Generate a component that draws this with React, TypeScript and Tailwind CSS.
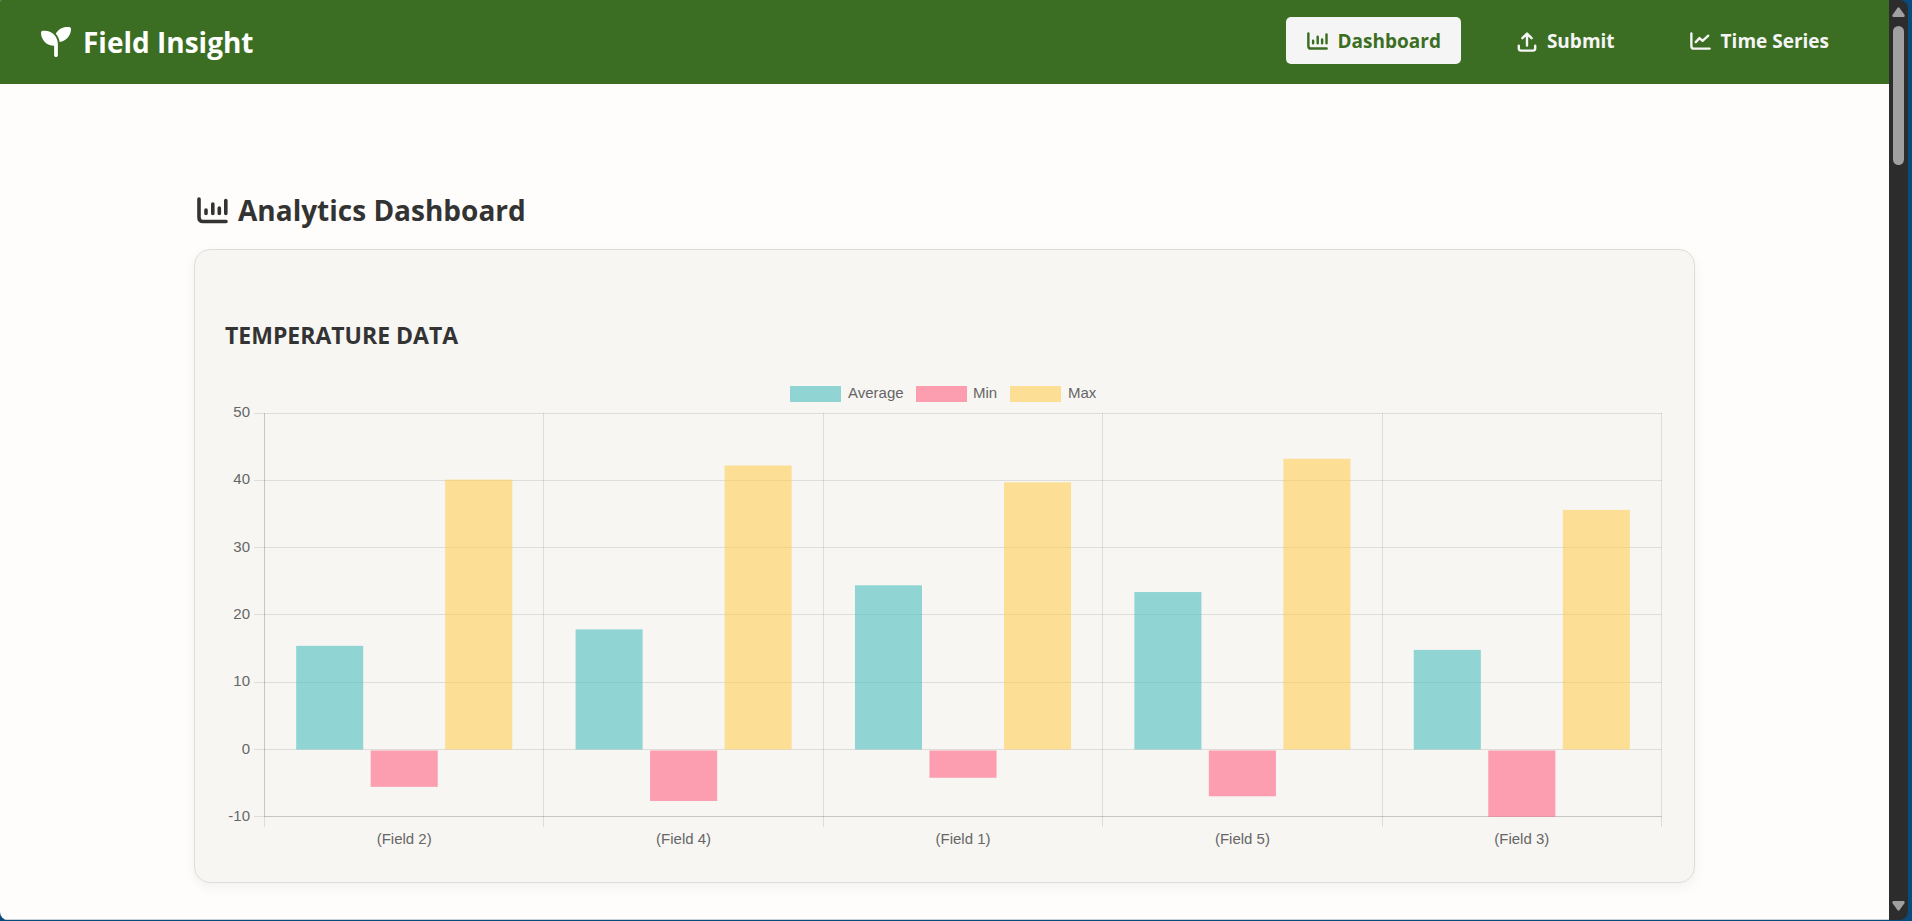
import type { ReactNode } from "react";
import { FaSeedling } from "react-icons/fa6";

const AXES = "M2 2V20.5Q2 24.5 6 24.5H29";

function BarsIcon({ className }: { className: string }) {
  return (
    <svg viewBox="0 0 31 27" className={className} fill="none" stroke="currentColor" strokeWidth="3.6" strokeLinecap="round" aria-hidden="true">
      <path d={AXES} />
      <path d="M9 13V16.5M15.8 7V16.5M22.3 11V16.5M28.8 3.5V16.5" />
    </svg>
  );
}

function LineIcon({ className }: { className: string }) {
  return (
    <svg viewBox="0 0 31 27" className={className} fill="none" stroke="currentColor" strokeWidth="3.5" strokeLinecap="round" strokeLinejoin="round" aria-hidden="true">
      <path d={AXES} />
      <path d="M8.5 15L14 9L18.5 13L27 5.5" />
    </svg>
  );
}

function UploadIcon({ className }: { className: string }) {
  return (
    <svg viewBox="0 0 20 20" className={className} fill="none" stroke="currentColor" strokeWidth="2.4" strokeLinecap="round" strokeLinejoin="round" aria-hidden="true">
      <path d="M1.8 13.8V16.2Q1.8 18.6 4.2 18.6H15.8Q18.2 18.6 18.2 16.2V13.8M10 13.5V1.6M5.4 6.2L10 1.6L14.6 6.2" />
    </svg>
  );
}

function NavItem({ label, active, children }: { label: string; active?: boolean; children: ReactNode }) {
  const tone = active ? "bg-[#f5f5f5] text-[#3b6e22]" : "text-[#f5f5f5]";
  return (
    <a
      href={"#" + label.toLowerCase().replace(" ", "-")}
      aria-current={active ? "page" : undefined}
      className={`flex h-[47px] items-center gap-2 rounded-[5px] px-5 pt-[2px] text-[19px] font-bold ${tone}`}
    >
      <span className="flex w-6 justify-center">{children}</span>
      {label}
    </a>
  );
}

const series = [
  { name: "Average", fill: "rgba(75,192,192,0.6)", x: 565, textX: 623, values: [15.4, 17.85, 24.4, 23.4, 14.8] },
  { name: "Min", fill: "rgba(255,99,132,0.6)", x: 691, textX: 748, values: [-5.55, -7.65, -4.2, -6.95, -10] },
  { name: "Max", fill: "rgba(255,206,86,0.6)", x: 785, textX: 843, values: [40.1, 42.2, 39.7, 43.2, 35.6] },
];
const fields = ["(Field 2)", "(Field 4)", "(Field 1)", "(Field 5)", "(Field 3)"];
const ticks = [50, 40, 30, 20, 10, 0, -10];

const LEFT = 39.5;
const RIGHT = 1436.5;
const STEP = (RIGHT - LEFT) / fields.length;
const UNIT = 6.73;
const ZERO = 369.5;
const yOf = (value: number) => ZERO - value * UNIT;
const snap = (value: number) => Math.floor(value) + 0.5;

function TemperatureChart() {
  const slot = (STEP * 0.8) / 3;
  const bar = slot * 0.9;
  return (
    <svg viewBox="0 0 1439 474" className="block w-full font-['Liberation_Sans',Arial,sans-serif] text-[15px]" role="img" aria-label="Average, minimum and maximum temperature by field">
      <g stroke="rgba(0,0,0,0.1)">
        {ticks.map((t) => (
          <path key={t} d={`M29 ${snap(yOf(t))}H${RIGHT + 0.5}`} />
        ))}
        {[0, 1, 2, 3, 4, 5].map((i) => (
          <path key={i} d={`M${snap(LEFT + i * STEP)} 33V447`} />
        ))}
        <path d={`M${LEFT} 33V437M${LEFT} ${snap(yOf(-10))}H${RIGHT}`} />
      </g>
      {series.map((s, n) =>
        s.values.map((v, i) => (
          <rect
            key={s.name + i}
            x={LEFT + i * STEP + STEP * 0.1 + n * slot + (slot - bar) / 2}
            y={v > 0 ? yOf(v) : ZERO + 1}
            width={bar}
            height={v > 0 ? v * UNIT : -v * UNIT - 1}
            fill={s.fill}
          />
        )),
      )}
      <g fill="#666">
        {ticks.map((t) => (
          <text key={t} x="25" y={yOf(t) + 4} textAnchor="end">{t}</text>
        ))}
        {fields.map((f, i) => (
          <text key={f} x={LEFT + (i + 0.5) * STEP} y="464" textAnchor="middle">{f}</text>
        ))}
        {series.map((s) => (
          <text key={s.name} x={s.textX} y="18">{s.name}</text>
        ))}
      </g>
      {series.map((s) => (
        <rect key={s.name} x={s.x} y="6" width="51" height="16" fill={s.fill} />
      ))}
    </svg>
  );
}

function ScrollRail() {
  return (
    <div className="flex w-[19px] shrink-0 flex-col items-center rounded-r-lg bg-[#2c2c2c] text-[#a0a0a0]" aria-hidden="true">
      <svg viewBox="0 0 13 10" className="mt-[7px] h-[10px] w-[13px]" fill="currentColor">
        <path d="M5.4 1Q6.5 -0.4 7.6 1L12.6 8Q13 9.8 11.5 10H1.5Q0 9.8 0.4 8Z" />
      </svg>
      <div className="mt-[9px] h-[139px] w-[11px] rounded-full bg-[#a0a0a0]" />
      <svg viewBox="0 0 13 10" className="mt-auto mb-[9px] h-[10px] w-[13px]" fill="currentColor">
        <path d="M5.4 9Q6.5 10.4 7.6 9L12.6 2Q13 0.2 11.5 0H1.5Q0 0.2 0.4 2Z" />
      </svg>
    </div>
  );
}

export default function App() {
  return (
    <div className="h-screen bg-[#0b4a7c] pr-1 pb-px font-['Open_Sans','Noto_Sans',sans-serif] text-[#333]">
      <div className="flex h-full overflow-hidden rounded-tl-[2px] rounded-r-lg rounded-bl-lg">
        <div className="min-w-0 flex-1 overflow-hidden border-b border-[#c9d3da] bg-[#fefdfb]">
          <header className="flex h-[84px] items-center justify-between bg-[#3b6e22] pr-10 pb-[3px] pl-[41px] text-white">
            <div className="flex items-center gap-3 pt-[3px] text-[28px] leading-9 font-bold">
              <FaSeedling className="size-[30px]" aria-hidden="true" />
              Field Insight
            </div>
            <nav className="flex gap-[34px]">
              <NavItem label="Dashboard" active>
                <BarsIcon className="w-[21px]" />
              </NavItem>
              <NavItem label="Submit">
                <UploadIcon className="w-5" />
              </NavItem>
              <NavItem label="Time Series">
                <LineIcon className="w-[21px]" />
              </NavItem>
            </nav>
          </header>
          <main className="mx-auto max-w-[1501px] pt-[106px]">
            <h1 className="flex items-center gap-[10px] pl-[3px] text-[28px] leading-10 font-bold">
              <BarsIcon className="w-[31px]" />
              Analytics Dashboard
            </h1>
            <section className="mt-[19px] rounded-2xl border border-[#dddddb] bg-[#f7f6f3] px-[30px] pt-[68px] pb-[28px] shadow-[0_4px_12px_rgba(0,0,0,0.05)]">
              <h2 className="text-[23px] leading-[34px] font-bold">TEMPERATURE DATA</h2>
              <div className="mt-[28px]">
                <TemperatureChart />
              </div>
            </section>
          </main>
        </div>
        <ScrollRail />
      </div>
    </div>
  );
}
